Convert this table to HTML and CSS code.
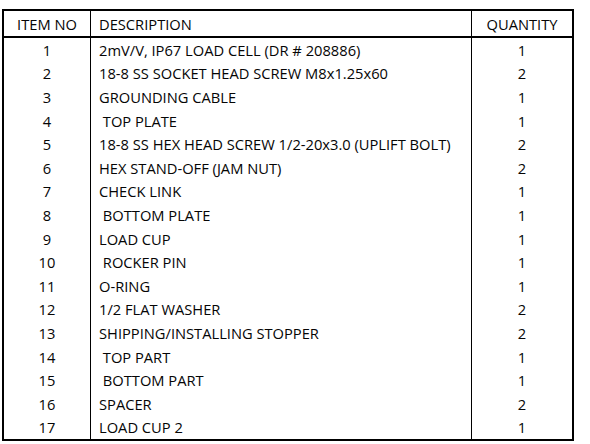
FILE: index.html
```html
<!DOCTYPE html>
<html>
<head>
<meta charset="utf-8">
<link rel="stylesheet" href="styles.css">
</head>
<body>
<table class="bom">
  <thead>
    <tr><th class="c-no">ITEM NO</th><th class="c-desc">DESCRIPTION</th><th class="c-qty">QUANTITY</th></tr>
  </thead>
  <tbody>
    <tr><td class="c-no">1</td><td class="c-desc">2mV/V, IP67 LOAD CELL (DR # 208886)</td><td class="c-qty">1</td></tr>
    <tr><td class="c-no">2</td><td class="c-desc">18-8 SS SOCKET HEAD SCREW M8x1.25x60</td><td class="c-qty">2</td></tr>
    <tr><td class="c-no">3</td><td class="c-desc">GROUNDING CABLE</td><td class="c-qty">1</td></tr>
    <tr><td class="c-no">4</td><td class="c-desc"> TOP PLATE</td><td class="c-qty">1</td></tr>
    <tr><td class="c-no">5</td><td class="c-desc">18-8 SS HEX HEAD SCREW 1/2-20x3.0 (UPLIFT BOLT)</td><td class="c-qty">2</td></tr>
    <tr><td class="c-no">6</td><td class="c-desc">HEX STAND-OFF (JAM NUT)</td><td class="c-qty">2</td></tr>
    <tr><td class="c-no">7</td><td class="c-desc">CHECK LINK</td><td class="c-qty">1</td></tr>
    <tr><td class="c-no">8</td><td class="c-desc"> BOTTOM PLATE</td><td class="c-qty">1</td></tr>
    <tr><td class="c-no">9</td><td class="c-desc">LOAD CUP</td><td class="c-qty">1</td></tr>
    <tr><td class="c-no">10</td><td class="c-desc"> ROCKER PIN</td><td class="c-qty">1</td></tr>
    <tr><td class="c-no">11</td><td class="c-desc">O-RING</td><td class="c-qty">1</td></tr>
    <tr><td class="c-no">12</td><td class="c-desc">1/2 FLAT WASHER</td><td class="c-qty">2</td></tr>
    <tr><td class="c-no">13</td><td class="c-desc">SHIPPING/INSTALLING STOPPER</td><td class="c-qty">2</td></tr>
    <tr><td class="c-no">14</td><td class="c-desc"> TOP PART</td><td class="c-qty">1</td></tr>
    <tr><td class="c-no">15</td><td class="c-desc"> BOTTOM PART</td><td class="c-qty">1</td></tr>
    <tr><td class="c-no">16</td><td class="c-desc">SPACER</td><td class="c-qty">2</td></tr>
    <tr><td class="c-no">17</td><td class="c-desc">LOAD CUP 2</td><td class="c-qty">1</td></tr>
  </tbody>
</table>
</body>
</html>
```
FILE: styles.css
```css
html, body {
  margin: 0;
  background: #fff;
}
body {
  padding: 9px 0 0 2px;
  font-family: "Open Sans", "Liberation Sans", sans-serif;
  font-size: 14.7px;
  color: #050505;
}
.bom {
  border-collapse: collapse;
  width: 572px;
  table-layout: fixed;
  border: 2px solid #000;
}
.bom th, .bom td {
  padding: 0;
  font-weight: normal;
  line-height: 20px;
  border-left: 1px solid #000;
  border-right: 1px solid #000;
}
.bom th {
  height: 25px;
  border-bottom: 2px solid #000;
}
.bom td {
  height: 23.6px;
}
.c-no { width: 86px; text-align: center; }
.c-qty { width: 100px; text-align: center; }
.c-desc { text-align: left; padding-left: 8px !important; white-space: pre; }
```
